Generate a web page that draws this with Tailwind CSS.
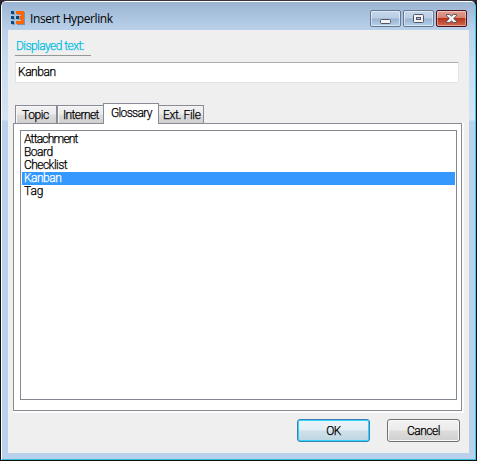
<!DOCTYPE html>
<html lang="en">
<head>
<meta charset="utf-8">
<title>Insert Hyperlink</title>
<script src="https://cdn.jsdelivr.net/npm/@tailwindcss/browser@4"></script>
</head>
<body class="h-[461px] w-[477px] overflow-hidden bg-[#2b2730]">
<div class="h-[461px] w-[477px] overflow-hidden rounded-t-[6px] border border-[#101014] border-t-[#38343f] font-['Roboto','Liberation_Sans',sans-serif] text-[12px] leading-[13px] font-light text-black [-webkit-text-stroke:0.25px]">
<div class="flex h-full flex-col rounded-t-[5px] border border-white border-r-[#35cde8] border-b-[#32bcd8] bg-[linear-gradient(#9bb4d2_0px,#b9d1ea_28px,#c8dcf1_60px,#d5e4f5_118px,#b9d1ea_119px,#b9d1ea_100%)] pr-[6px] pb-[6px] pl-[6px]">
  <header class="flex h-[28px] shrink-0 items-start">
    <svg class="mt-[9px] ml-[3px] h-[14px] w-[14px]" viewBox="0 0 14 14" shape-rendering="crispEdges">
      <path d="M6 1h8v13H6v-3h5V9H7V6h4V4H6z" fill="#8a8f99"/>
      <path d="M5 0h8v13H5v-3h5V8H8V5h2V3H5z" fill="#f60"/>
      <path d="M1 1h3v3H1zM1 6h3v3H1zM1 11h3v3H1zM6 6h3v3H6z" fill="#8d9fb4"/>
      <path d="M0 0h3v3H0zM0 5h3v3H0zM0 10h3v3H0zM5 5h3v3H5z" fill="#074b80"/>
    </svg>
    <h1 class="mt-[8px] ml-[5px] grow whitespace-nowrap font-['Open_Sans','Noto_Sans',sans-serif] text-[12px] leading-[17px] font-normal tracking-[-0.4px] [-webkit-text-stroke:0px]">Insert Hyperlink</h1>
    <div class="mt-[8px] mr-[2px] flex gap-[2px]">
      <button aria-label="Minimize" class="flex h-[17px] w-[31px] items-center justify-center rounded-[2px] border border-[#66788f] bg-[linear-gradient(#c4d7ec_0%,#b9cde4_48%,#9bb4d0_52%,#b4d0eb_100%)] pt-[5px] shadow-[inset_0_0_0_1px_#ffffff80]">
        <svg class="h-[5px] w-[11px]" viewBox="0 0 11 5"><rect x=".5" y=".5" width="10" height="4" rx="1" fill="#f3f3f3" stroke="#535666"/></svg>
      </button>
      <button aria-label="Maximize" class="flex h-[17px] w-[31px] items-center justify-center rounded-[2px] border border-[#66788f] bg-[linear-gradient(#c4d7ec_0%,#b9cde4_48%,#9bb4d0_52%,#b4d0eb_100%)] shadow-[inset_0_0_0_1px_#ffffff80]">
        <svg class="h-[9px] w-[11px]" viewBox="0 0 11 9"><rect x=".5" y=".5" width="10" height="8" rx="1" fill="#f3f3f3" stroke="#535666"/><rect x="3.500" y="3.500" width="4" height="2" fill="#a8bfda" stroke="#535666"/></svg>
      </button>
      <button aria-label="Close" class="flex h-[17px] w-[31px] items-center justify-center rounded-[2px] border border-[#4d1422] bg-[linear-gradient(#e3a195_0%,#d5806f_46%,#b9321b_50%,#cf6a50_100%)] shadow-[inset_0_0_0_1px_#ffffff66]">
        <svg class="h-[9px] w-[11px]" viewBox="0 0 11 9"><path d="M.5.5h3l2 1.500 2-1.500h3v1.300L7.700 4.500l2.800 2.700v1.300h-3l-2-1.500-2 1.500h-3V7.200l2.800-2.700L.5 1.800z" fill="#f4f4f4" stroke="#535666"/></svg>
      </button>
    </div>
  </header>
  <main class="flex grow flex-col bg-[#efefef] pr-[7px] pl-[5px]">
    <label class="mt-[9px] ml-[2px] h-[17px] w-[76px] whitespace-nowrap border-b border-[#969696] pl-px leading-[14px] tracking-[-0.55px] text-[#00bddf]">Displayed text:</label>
    <div class="mt-[6px] ml-[2px] mr-[3px] flex h-[21px] shrink-0 items-center rounded-[1px] border border-[#e2e3ea] border-t-[#abadb3] bg-white pl-[2px] tracking-[-0.45px]">Kanban</div>
    <nav class="mt-[20px] ml-[2px] flex h-[20px] shrink-0 items-end whitespace-nowrap">
      <div class="h-[18px] w-[42px] border border-b-0 border-[#898c95] bg-[linear-gradient(#f2f2f2_0%,#ebebeb_48%,#dddddd_52%,#cfcfcf_100%)] pt-[3px] pl-[6px] tracking-[-0.4px] shadow-[inset_1px_1px_0_#f8f8f8]">Topic</div>
      <div class="h-[18px] w-[46px] border border-r-0 border-b-0 border-[#898c95] bg-[linear-gradient(#f2f2f2_0%,#ebebeb_48%,#dddddd_52%,#cfcfcf_100%)] pt-[3px] pl-[5px] tracking-[-0.6px] shadow-[inset_1px_1px_0_#f8f8f8]">Internet</div>
      <div class="z-10 -mb-px h-[21px] w-[56px] border border-b-0 border-[#898c95] bg-white pt-[3px] pl-[7px] tracking-[-0.65px]">Glossary</div>
      <div class="h-[18px] w-[45px] border border-l-0 border-b-0 border-[#898c95] bg-[linear-gradient(#f2f2f2_0%,#ebebeb_48%,#dddddd_52%,#cfcfcf_100%)] pt-[3px] pl-[4px] tracking-[-0.35px]">Ext. File</div>
    </nav>
    <section class="h-[288px] w-[449px] shrink-0 border border-[#898c95] bg-white px-[6px] pt-[6px] shadow-[1px_1px_0_1px_#fcfcfc]">
      <ul class="h-[270px] w-[437px] -mr-[2px] border border-[#828790] bg-white px-px pt-[2px]">
        <li class="h-[13px] pl-[2px] tracking-[-0.8px]">Attachment</li>
        <li class="h-[13px] pl-[2px] tracking-[-0.5px]">Board</li>
        <li class="h-[13px] pl-[2px] tracking-[-0.55px]">Checklist</li>
        <li class="h-[13px] bg-[#3399ff] pl-[2px] tracking-[-0.5px] text-white">Kanban</li>
        <li class="h-[13px] pl-[2px] tracking-[-0.1px]">Tag</li>
      </ul>
    </section>
    <footer class="mt-[8px] mr-[2px] flex justify-end gap-[17px]">
      <button class="h-[23px] w-[73px] rounded-[3px] border border-[#3c7fb1] bg-[linear-gradient(#edf4f8_0%,#e2eef4_48%,#cfe1eb_52%,#bdd6e3_100%)] pt-px tracking-[-0.5px] shadow-[inset_0_0_0_1px_#2fd3fb]">OK</button>
      <button class="h-[23px] w-[73px] rounded-[3px] border border-[#707070] bg-[linear-gradient(#f2f2f2_0%,#ebebeb_48%,#dddddd_52%,#cfcfcf_100%)] pt-px tracking-[-0.5px] shadow-[inset_0_0_0_1px_#f8f8f8]">Cancel</button>
    </footer>
  </main>
</div>
</div>
</body>
</html>
